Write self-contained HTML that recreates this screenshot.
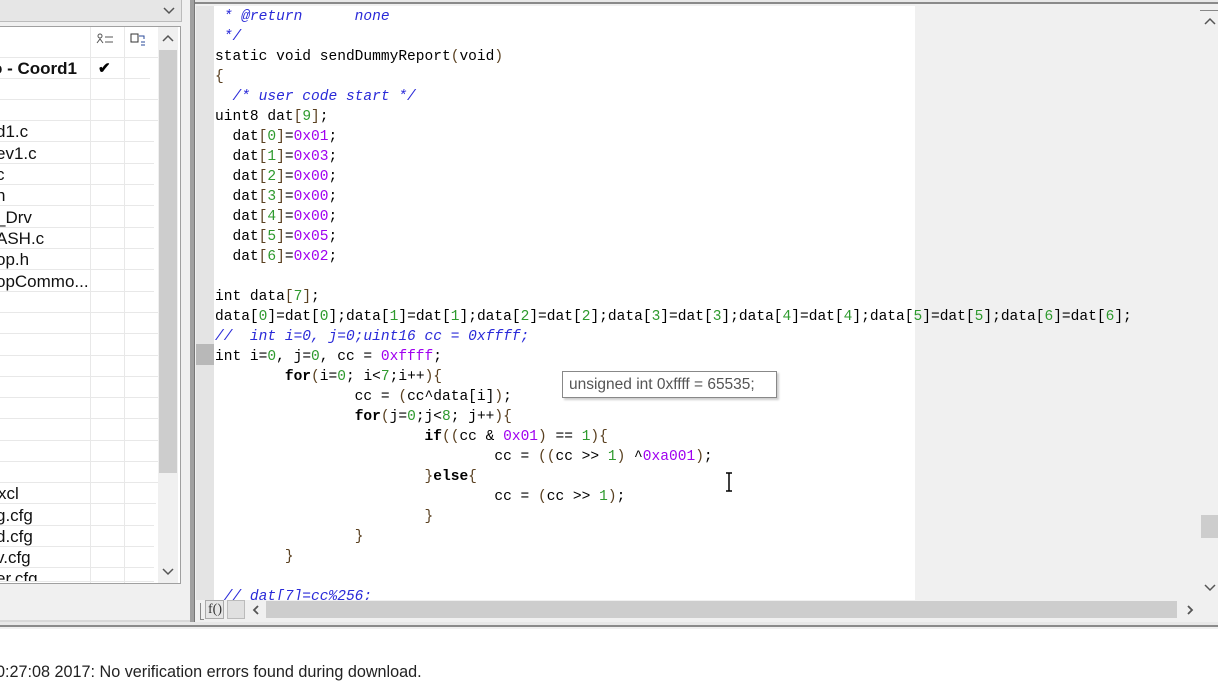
<!DOCTYPE html>
<html><head><meta charset="utf-8"><style>
*{margin:0;padding:0;box-sizing:border-box}
body{width:1218px;height:684px;overflow:hidden;background:#f0f0f0;position:relative;font-family:"Liberation Sans",sans-serif}
.a{position:absolute}
.row{position:absolute;left:0;width:158px;height:21px;border-bottom:1px solid #e8e8e8;font-size:17px;line-height:21px;color:#111;white-space:nowrap}
.code{position:absolute;left:215px;top:5px;font-family:"Liberation Mono",monospace;font-size:14.55px;line-height:20px;white-space:pre;color:#000}
.c{color:#2a2ad8;font-style:italic}
.n{color:#2e9a2e}
.h{color:#a000f0}
.p{color:#5a4020}
.b{font-weight:bold}
</style></head><body>
<!-- left panel -->
<div class="a" style="left:0;top:0;width:182px;height:22px;background:#e6e6e6;border-bottom:1px solid #bbb;border-right:1px solid #bbb"></div>
<svg class="a" style="left:162px;top:5px" width="14" height="10"><path d="M2 3 L7 8 L12 3" stroke="#555" stroke-width="1.5" fill="none"/></svg>
<div class="a" style="left:0;top:26px;width:181px;height:558px;background:#fff;border:1px solid #a0a0a0;border-left:none"></div>
<div class="a" style="left:90px;top:27px;width:1px;height:556px;background:#e8e8e8"></div>
<div class="a" style="left:124px;top:27px;width:1px;height:556px;background:#e8e8e8"></div>
<div class="a" style="left:0;top:57px;width:158px;height:1px;background:#e8e8e8"></div>
<svg class="a" style="left:96px;top:33px" width="20" height="16"><circle cx="4" cy="3" r="2" fill="none" stroke="#555"/><path d="M1 10 L4 6 L7 10 M9 4h8 M9 9h8" stroke="#555" fill="none"/></svg>
<svg class="a" style="left:130px;top:33px" width="20" height="16"><rect x="1" y="1" width="7" height="8" fill="none" stroke="#333"/><path d="M9 3h5v3 M11 9h4 M11 12h4" stroke="#2a4a9a" fill="none"/></svg>
<div class="row b" style="top:58px;font-weight:bold;font-size:17px;left:-8px">o - Coord1</div>
<div class="a" style="left:98px;top:59px;font-size:15px;font-weight:bold">&#10004;</div>
<div class="row" style="top:79px"></div>
<div class="row" style="top:100px"></div>
<div class="row" style="top:121px;left:-4px">d1.c</div>
<div class="row" style="top:143px;left:-4px">ev1.c</div>
<div class="row" style="top:164px;left:-4px">c</div>
<div class="row" style="top:185px;left:-4px">h</div>
<div class="row" style="top:207px;left:-4px">_Drv</div>
<div class="row" style="top:228px;left:-4px">ASH.c</div>
<div class="row" style="top:249px;left:-4px">op.h</div>
<div class="row" style="top:271px;left:-4px">opCommo...</div>
<div class="row" style="top:292px"></div><div class="row" style="top:313px"></div><div class="row" style="top:335px"></div><div class="row" style="top:356px"></div><div class="row" style="top:377px"></div><div class="row" style="top:398px"></div><div class="row" style="top:420px"></div><div class="row" style="top:441px"></div><div class="row" style="top:462px"></div>
<div class="row" style="top:483px;left:-2px">xcl</div>
<div class="row" style="top:505px;left:-4px">g.cfg</div>
<div class="row" style="top:526px;left:-4px">d.cfg</div>
<div class="row" style="top:547px;left:-4px">v.cfg</div>
<div class="row" style="top:568px;left:-4px;height:14px;overflow:hidden">er.cfg</div>
<div class="a" style="left:158px;top:27px;width:20px;height:556px;background:#f0f0f0"></div>
<div class="a" style="left:159px;top:50px;width:18px;height:423px;background:#cdcdcd"></div>
<svg class="a" style="left:161px;top:34px" width="14" height="10"><path d="M2 7 L7 2 L12 7" stroke="#555" stroke-width="1.5" fill="none"/></svg>
<svg class="a" style="left:161px;top:566px" width="14" height="10"><path d="M2 3 L7 8 L12 3" stroke="#555" stroke-width="1.5" fill="none"/></svg>
<div class="a" style="left:190px;top:0;width:5px;height:622px;background:#a0a0a0;border-right:1px solid #777"></div>
<div class="a" style="left:0;top:620px;width:190px;height:2px;background:#d8d8d8"></div>
<!-- editor -->
<div class="a" style="left:195px;top:0;width:1023px;height:4px;background:#e8e8e8;border-bottom:2px solid #8a8a8a"></div>
<div class="a" style="left:196px;top:6px;width:18px;height:594px;background:#e4e4e4"></div>
<div class="a" style="left:196px;top:344px;width:18px;height:21px;background:#b8b8b8"></div>
<div class="a" style="left:214px;top:6px;width:701px;height:594px;background:#fff"></div>
<div class="a" style="left:196px;top:6px;width:1004px;height:594px;overflow:hidden">
<div class="code" style="left:19px;top:1px"><span class="c"> * @return      none</span>
<span class="c"> */</span>
static void sendDummyReport<span class="p">(</span>void<span class="p">)</span>
<span class="p">{</span>
<span class="c">  /* user code start */</span>
uint8 dat<span class="p">[</span><span class="n">9</span><span class="p">]</span>;
  dat<span class="p">[</span><span class="n">0</span><span class="p">]</span>=<span class="h">0x01</span>;
  dat<span class="p">[</span><span class="n">1</span><span class="p">]</span>=<span class="h">0x03</span>;
  dat<span class="p">[</span><span class="n">2</span><span class="p">]</span>=<span class="h">0x00</span>;
  dat<span class="p">[</span><span class="n">3</span><span class="p">]</span>=<span class="h">0x00</span>;
  dat<span class="p">[</span><span class="n">4</span><span class="p">]</span>=<span class="h">0x00</span>;
  dat<span class="p">[</span><span class="n">5</span><span class="p">]</span>=<span class="h">0x05</span>;
  dat<span class="p">[</span><span class="n">6</span><span class="p">]</span>=<span class="h">0x02</span>;

int data<span class="p">[</span><span class="n">7</span><span class="p">]</span>;
data[<span class="n">0</span>]=dat[<span class="n">0</span>];data[<span class="n">1</span>]=dat[<span class="n">1</span>];data[<span class="n">2</span>]=dat[<span class="n">2</span>];data[<span class="n">3</span>]=dat[<span class="n">3</span>];data[<span class="n">4</span>]=dat[<span class="n">4</span>];data[<span class="n">5</span>]=dat[<span class="n">5</span>];data[<span class="n">6</span>]=dat[<span class="n">6</span>];
<span class="c">//  int i=0, j=0;uint16 cc = 0xffff;</span>
int i=<span class="n">0</span>, j=<span class="n">0</span>, cc = <span class="h">0xffff</span>;
        <span class="b">for</span><span class="p">(</span>i=<span class="n">0</span>; i&lt;<span class="n">7</span>;i++<span class="p">){</span>
                cc = <span class="p">(</span>cc^data[i]<span class="p">)</span>;
                <span class="b">for</span><span class="p">(</span>j=<span class="n">0</span>;j&lt;<span class="n">8</span>; j++<span class="p">){</span>
                        <span class="b">if</span><span class="p">((</span>cc &amp; <span class="h">0x01</span><span class="p">)</span> == <span class="n">1</span><span class="p">){</span>
                                cc = <span class="p">((</span>cc &gt;&gt; <span class="n">1</span><span class="p">)</span> ^<span class="h">0xa001</span><span class="p">)</span>;
                        <span class="p">}</span><span class="b">else</span><span class="p">{</span>
                                cc = <span class="p">(</span>cc &gt;&gt; <span class="n">1</span><span class="p">)</span>;
                        <span class="p">}</span>
                <span class="p">}</span>
        <span class="p">}</span>

<span class="c"> // dat[7]=cc%256;</span></div>
</div>
<!-- tooltip -->
<div class="a" style="left:562px;top:371px;width:215px;height:27px;background:#fff;border:1px solid #888;box-shadow:2px 2px 2px rgba(0,0,0,.2);font-size:15.5px;line-height:25px;color:#555;padding-left:6px;white-space:nowrap">unsigned int 0xffff = 65535;</div>
<svg class="a" style="left:724px;top:472px" width="10" height="20"><path d="M2 1h6 M5 1v18 M2 19h6" stroke="#000" stroke-width="1.5"/></svg>
<!-- vscroll -->
<div class="a" style="left:1200px;top:6px;width:18px;height:594px;background:#f0f0f0"></div>
<div class="a" style="left:1200px;top:10px;width:18px;height:1px;background:#888"></div>
<div class="a" style="left:1201px;top:515px;width:17px;height:23px;background:#cdcdcd"></div>
<svg class="a" style="left:1203px;top:17px" width="14" height="10"><path d="M2 7 L7 2 L12 7" stroke="#555" stroke-width="1.5" fill="none"/></svg>
<svg class="a" style="left:1203px;top:582px" width="14" height="10"><path d="M2 3 L7 8 L12 3" stroke="#555" stroke-width="1.5" fill="none"/></svg>
<!-- hscroll -->
<div class="a" style="left:196px;top:600px;width:1022px;height:20px;background:#f0f0f0"></div>
<div class="a" style="left:200px;top:603px;width:4px;height:17px;border-left:1px solid #888;border-bottom:1px solid #888"></div>
<div class="a" style="left:205px;top:600px;width:19px;height:19px;background:#e6e6e6;border:1px solid #aaa;font-family:'Liberation Serif',serif;font-size:14px;line-height:18px;color:#333;padding-left:2px">f()</div>
<div class="a" style="left:227px;top:600px;width:18px;height:19px;background:#e0e0e0;border:1px solid #bbb"></div>
<svg class="a" style="left:250px;top:603px" width="12" height="14"><path d="M8 3 L4 7 L8 11" stroke="#555" stroke-width="1.8" fill="none"/></svg>
<div class="a" style="left:266px;top:601px;width:911px;height:17px;background:#cdcdcd"></div>
<svg class="a" style="left:1184px;top:603px" width="12" height="14"><path d="M4 3 L8 7 L4 11" stroke="#555" stroke-width="1.8" fill="none"/></svg>
<div class="a" style="left:0;top:622px;width:1218px;height:5px;background:#e8e8e8;border-bottom:2px solid #8a8a8a"></div>
<div class="a" style="left:0;top:629px;width:1218px;height:55px;background:#fff"></div>
<div class="a" style="left:-4px;top:663px;font-size:16.2px;color:#222;white-space:nowrap">0:27:08 2017: No verification errors found during download.</div>
</body></html>
